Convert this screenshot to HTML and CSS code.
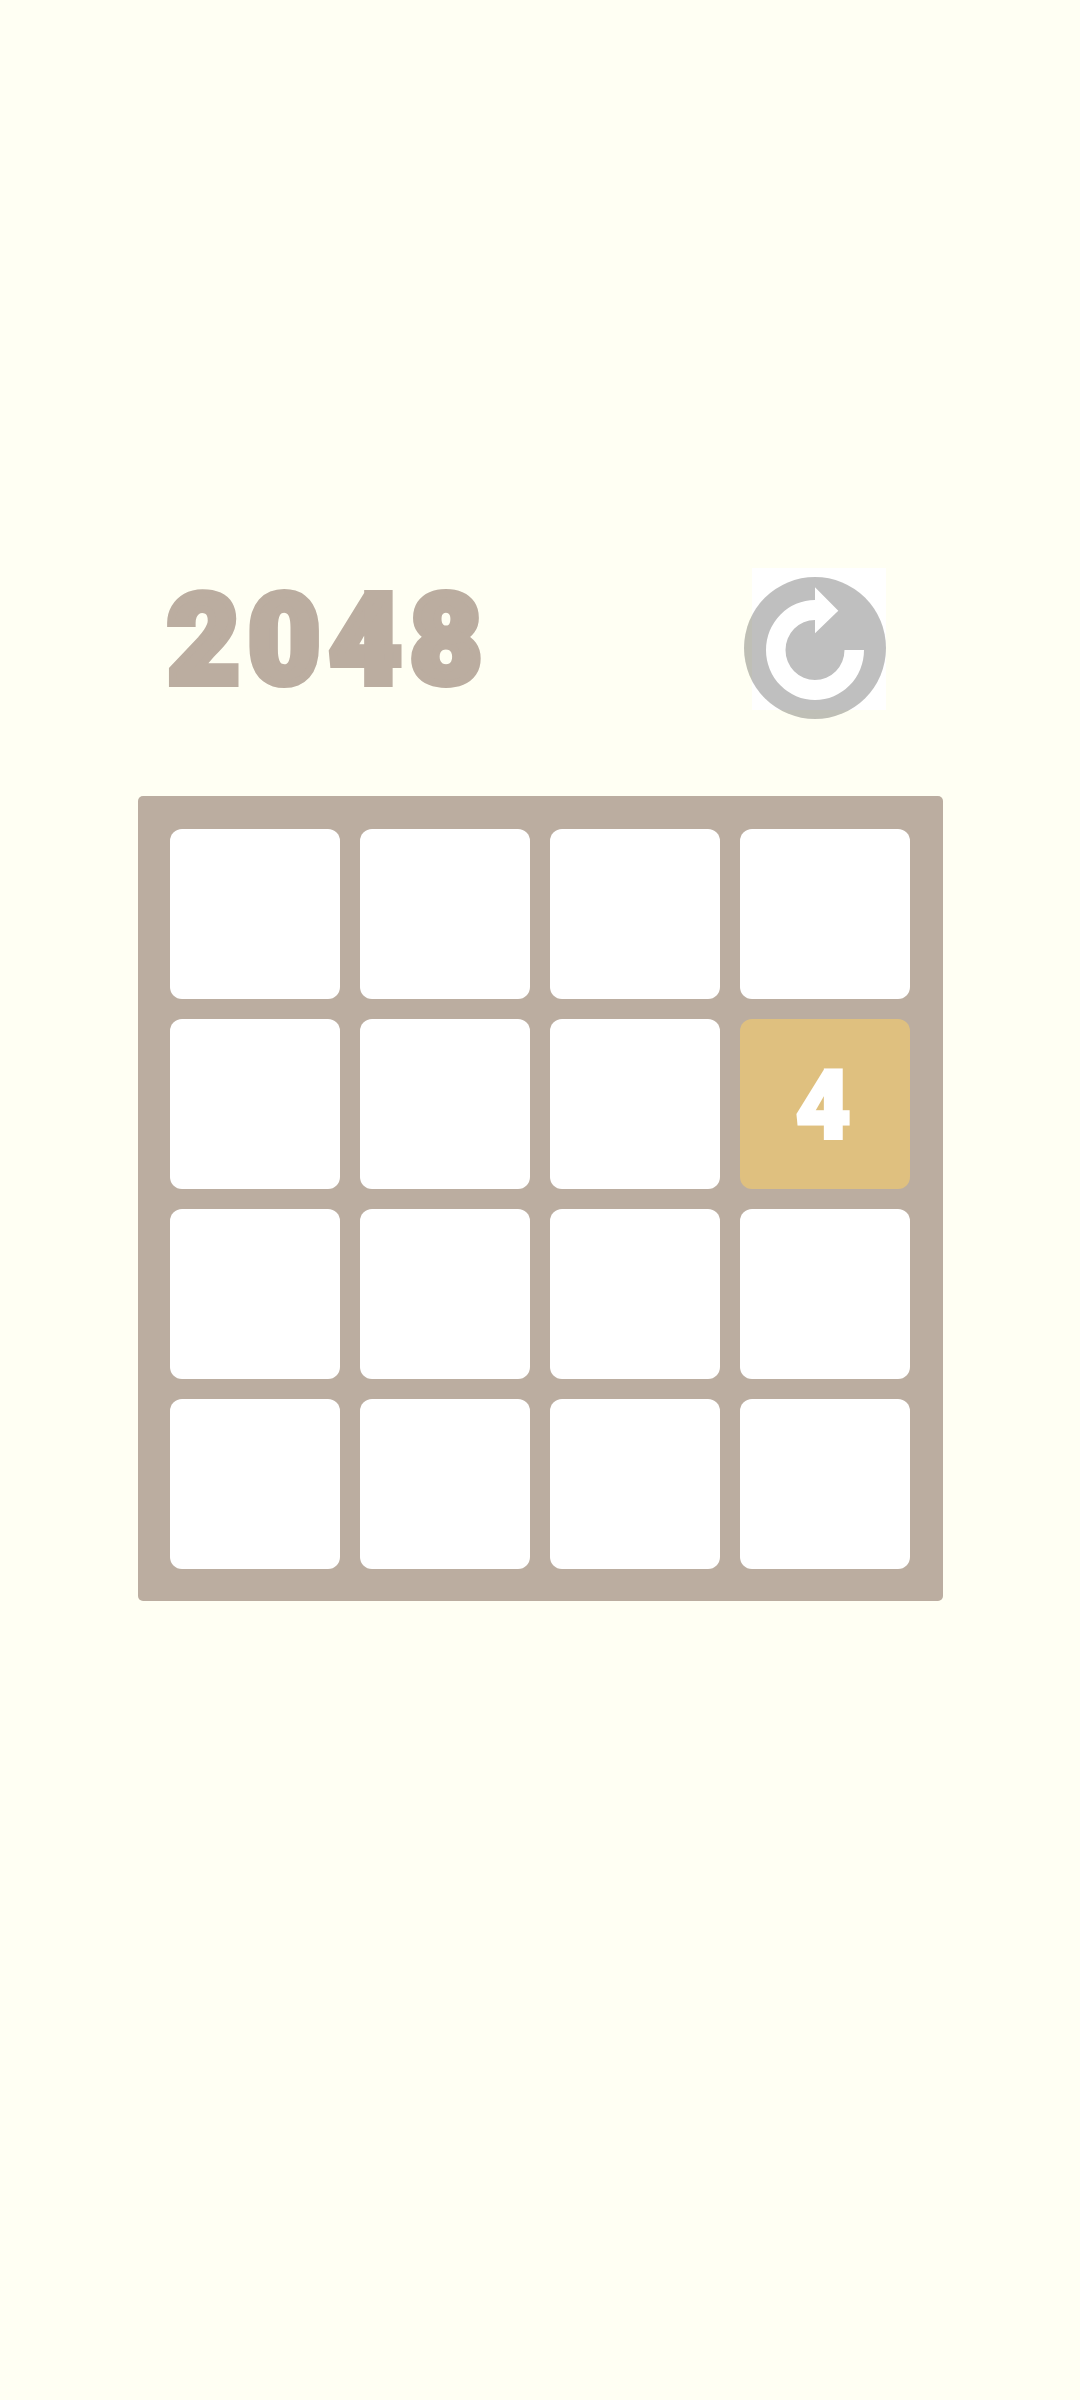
FILE: index.html
```html
<!DOCTYPE html>
<html>
<head>
<meta charset="utf-8">
<title>2048</title>
<link rel="stylesheet" href="styles.css">
</head>
<body>
<div id="container">
  <div class="header">
    <div class="logo">2048</div>
    <svg class="restart" viewBox="740 565 150 160" width="150" height="160">
      <rect x="752" y="568" width="134" height="142" fill="#fff"/>
      <circle cx="815" cy="648" r="71" fill="#000" fill-opacity=".25"/>
      <path d="M864 650A49 50 0 1 1 815 600V587.3L838.3 610.7 815 633.3V620A29.5 30 0 1 0 844.5 650Z" fill="#fff"/>
    </svg>
  </div>
  <div class="board">
    <div class="tile"></div>
    <div class="tile"></div>
    <div class="tile"></div>
    <div class="tile"></div>
    <div class="tile"></div>
    <div class="tile"></div>
    <div class="tile"></div>
    <div class="tile four">4</div>
    <div class="tile"></div>
    <div class="tile"></div>
    <div class="tile"></div>
    <div class="tile"></div>
    <div class="tile"></div>
    <div class="tile"></div>
    <div class="tile"></div>
    <div class="tile"></div>
  </div>
</div>
</body>
</html>
```

FILE: styles.css
```css
body {
  background-color: #fffff3;
  margin: 0;
}

#container {
  display: flex;
  flex-direction: column;
  align-items: center;
  height: 2400px;
  padding-top: 565px;
  box-sizing: border-box;
}

.header {
  display: flex;
  justify-content: space-between;
  align-items: flex-start;
  width: 805px;
  height: 231px;
  padding: 0 52.5px 0 30px;
  box-sizing: border-box;
}

.logo {
  margin-top: 16px;
  font-family: "Roboto", "Liberation Sans", sans-serif;
  font-size: 124px;
  font-weight: 900;
  line-height: 120px;
  letter-spacing: 9px;
  color: #bbada0;
  -webkit-text-stroke: 8px #bbada0;
}

.restart {
  display: block;
}

.board {
  display: grid;
  grid-template-columns: repeat(4, 170px);
  grid-auto-rows: 170px;
  gap: 20px;
  padding: 32.5px;
  border-radius: 5px;
  background-color: #bbada0;
}

.tile {
  display: flex;
  align-items: center;
  justify-content: center;
  border-radius: 12px;
  background-color: #fff;
}

.tile.four {
  padding: 5px 4px 0 0;
  box-sizing: border-box;
  background-color: #dfc07f;
  color: #fff;
  font-family: "Roboto", "Liberation Sans", sans-serif;
  font-size: 96px;
  font-weight: 900;
  line-height: 1;
  -webkit-text-stroke: 3px #fff;
}
```
